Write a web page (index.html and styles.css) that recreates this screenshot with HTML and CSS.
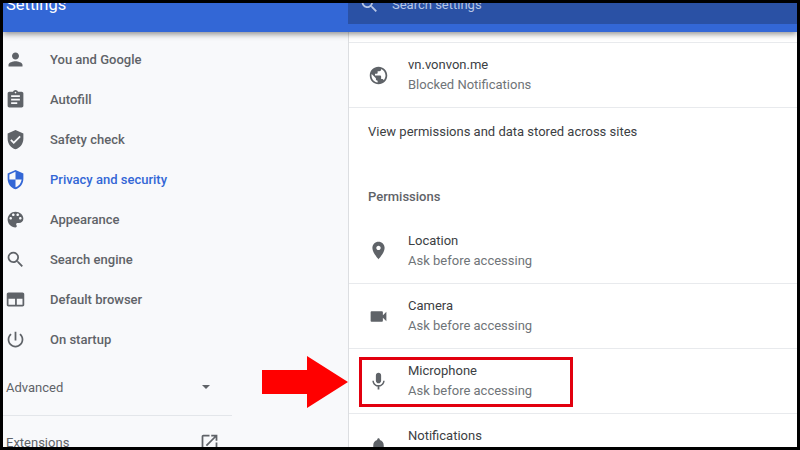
FILE: index.html
```html
<!DOCTYPE html>
<html lang="en">
	<head>
		<meta charset="UTF-8">
		<meta name="viewport" content="width=device-width, initial-scale=1.0">
		<title>Settings</title>
		<link rel="stylesheet" href="styles.css">
	</head>
	<body>
		<div class="app">
			<header class="topbar">
				<div class="topbar-title">Settings</div>
				<div class="searchbox">
					<svg class="search-icon" viewBox="0 0 24 24"><path d="M15.5 14h-.79l-.28-.27C15.41 12.59 16 11.11 16 9.5 16 5.91 13.09 3 9.5 3S3 5.91 3 9.5 5.91 16 9.5 16c1.61 0 3.09-.59 4.23-1.57l.27.28v.79l5 4.99L20.49 19l-4.99-5zm-6 0C7.01 14 5 11.99 5 9.5S7.01 5 9.5 5 14 7.01 14 9.5 11.99 14 9.5 14z"/></svg>
					<span>Search settings</span>
				</div>
			</header>
			<div class="content">
				<nav class="sidebar">
					<div class="nav-item">
						<svg class="icon" viewBox="0 0 24 24"><path d="M12 12c2.21 0 4-1.79 4-4s-1.79-4-4-4-4 1.79-4 4 1.79 4 4 4zm0 2c-2.67 0-8 1.34-8 4v2h16v-2c0-2.66-5.33-4-8-4z"/></svg>
						<span>You and Google</span>
					</div>
					<div class="nav-item">
						<svg class="icon" viewBox="0 0 24 24"><path d="M19 3h-4.18C14.4 1.84 13.3 1 12 1c-1.3 0-2.4.84-2.82 2H5c-1.1 0-2 .9-2 2v14c0 1.1.9 2 2 2h14c1.1 0 2-.9 2-2V5c0-1.1-.9-2-2-2zm-7 0c.55 0 1 .45 1 1s-.45 1-1 1-1-.45-1-1 .45-1 1-1zm2 14H7v-2h7v2zm3-4H7v-2h10v2zm0-4H7V7h10v2z"/></svg>
						<span>Autofill</span>
					</div>
					<div class="nav-item">
						<svg class="icon" viewBox="0 0 24 24"><path d="M12 1L3 5v6c0 5.55 3.84 10.74 9 12 5.16-1.26 9-6.45 9-12V5l-9-4zm-2 16l-4-4 1.41-1.41L10 14.17l6.59-6.59L18 9l-8 8z"/></svg>
						<span>Safety check</span>
					</div>
					<div class="nav-item active">
						<svg class="icon" viewBox="0 0 24 24"><path d="M12 1L3 5v6c0 5.55 3.84 10.74 9 12 5.16-1.26 9-6.45 9-12V5l-9-4zm0 10.99h7c-.53 4.12-3.28 7.79-7 8.94V12H5V6.3l7-3.11v8.8z"/></svg>
						<span>Privacy and security</span>
					</div>
					<div class="nav-item">
						<svg class="icon" viewBox="0 0 24 24"><path d="M12 3c-4.97 0-9 4.03-9 9s4.03 9 9 9c.83 0 1.5-.67 1.5-1.5 0-.39-.15-.74-.39-1.01-.23-.26-.38-.61-.38-.99 0-.83.67-1.5 1.5-1.5H16c2.76 0 5-2.24 5-5 0-4.42-4.03-8-9-8zm-5.5 9c-.83 0-1.5-.67-1.5-1.5S5.67 9 6.5 9 8 9.67 8 10.5 7.33 12 6.5 12zm3-4C8.67 8 8 7.33 8 6.5S8.67 5 9.5 5s1.5.67 1.5 1.5S10.33 8 9.5 8zm5 0c-.83 0-1.5-.67-1.5-1.5S13.67 5 14.5 5s1.5.67 1.5 1.5S15.33 8 14.5 8zm3 4c-.83 0-1.5-.67-1.5-1.5S16.67 9 17.5 9s1.5.67 1.5 1.5-.67 1.5-1.5 1.5z"/></svg>
						<span>Appearance</span>
					</div>
					<div class="nav-item">
						<svg class="icon" viewBox="0 0 24 24"><path d="M15.5 14h-.79l-.28-.27C15.41 12.59 16 11.11 16 9.5 16 5.91 13.09 3 9.5 3S3 5.91 3 9.5 5.91 16 9.5 16c1.61 0 3.09-.59 4.23-1.57l.27.28v.79l5 4.99L20.49 19l-4.99-5zm-6 0C7.01 14 5 11.99 5 9.5S7.01 5 9.5 5 14 7.01 14 9.5 11.99 14 9.5 14z"/></svg>
						<span>Search engine</span>
					</div>
					<div class="nav-item">
						<svg class="icon" viewBox="0 0 24 24"><path fill-rule="evenodd" d="M20 4H4c-1.1 0-2 .9-2 2v12c0 1.1.9 2 2 2h16c1.1 0 2-.9 2-2V6c0-1.1-.9-2-2-2zM4 11h7.5v7H4v-7zm9.5 0H20v7h-6.5v-7z"/></svg>
						<span>Default browser</span>
					</div>
					<div class="nav-item">
						<svg class="icon" viewBox="0 0 24 24"><path d="M13 3h-2v10h2V3zm4.83 2.17l-1.42 1.42C17.99 7.86 19 9.81 19 12c0 3.87-3.13 7-7 7s-7-3.13-7-7c0-2.19 1.01-4.14 2.58-5.42L6.17 5.17C4.23 6.82 3 9.26 3 12c0 4.97 4.03 9 9 9s9-4.03 9-9c0-2.74-1.23-5.18-3.17-6.83z"/></svg>
						<span>On startup</span>
					</div>
					<div class="nav-advanced">
						<span>Advanced</span>
						<i class="caret"></i>
					</div>
					<div class="nav-extensions">
						<span>Extensions</span>
						<svg class="icon" viewBox="0 0 24 24"><path d="M19 19H5V5h7V3H5c-1.11 0-2 .9-2 2v14c0 1.1.89 2 2 2h14c1.1 0 2-.9 2-2v-7h-2v7zM14 3v2h3.59l-9.83 9.83 1.41 1.41L19 6.41V10h2V3h-7z"/></svg>
					</div>
				</nav>
				<main class="panel">
					<div class="row first">
						<svg class="icon" viewBox="0 0 24 24"><path d="M12 2C6.48 2 2 6.48 2 12s4.48 10 10 10 10-4.48 10-10S17.52 2 12 2zm-1 17.93c-3.95-.49-7-3.85-7-7.93 0-.62.08-1.21.21-1.79L9 15v1c0 1.1.9 2 2 2v1.93zm6.9-2.54c-.26-.81-1-1.39-1.9-1.39h-1v-3c0-.55-.45-1-1-1H8v-2h2c.55 0 1-.45 1-1V7h2c1.1 0 2-.9 2-2v-.41c2.93 1.19 5 4.06 5 7.41 0 2.08-.8 3.97-2.1 5.39z"/></svg>
						<div class="row-text">
							<div class="row-title">vn.vonvon.me</div>
							<div class="row-sub">Blocked Notifications</div>
						</div>
					</div>
					<div class="view-link">View permissions and data stored across sites</div>
					<h2 class="section-title">Permissions</h2>
					<div class="row plain">
						<svg class="icon" viewBox="0 0 24 24"><path d="M12 2C8.13 2 5 5.13 5 9c0 5.25 7 13 7 13s7-7.75 7-13c0-3.87-3.13-7-7-7zm0 9.5c-1.38 0-2.5-1.12-2.5-2.5s1.12-2.5 2.5-2.5 2.5 1.12 2.5 2.5-1.12 2.5-2.5 2.5z"/></svg>
						<div class="row-text">
							<div class="row-title">Location</div>
							<div class="row-sub">Ask before accessing</div>
						</div>
					</div>
					<div class="row">
						<svg class="icon" viewBox="0 0 24 24"><path d="M17 10.5V7c0-.55-.45-1-1-1H4c-.55 0-1 .45-1 1v10c0 .55.45 1 1 1h12c.55 0 1-.45 1-1v-3.5l4 4v-11l-4 4z"/></svg>
						<div class="row-text">
							<div class="row-title">Camera</div>
							<div class="row-sub">Ask before accessing</div>
						</div>
					</div>
					<div class="row">
						<svg class="icon" viewBox="0 0 24 24"><path d="M12 14c1.66 0 2.99-1.34 2.99-3L15 5c0-1.66-1.34-3-3-3S9 3.34 9 5v6c0 1.66 1.34 3 3 3zm5.3-3c0 3-2.54 5.1-5.3 5.1S6.7 14 6.7 11H5c0 3.41 2.72 6.23 6 6.72V21h2v-3.28c3.28-.48 6-3.3 6-6.72h-1.7z"/></svg>
						<div class="row-text">
							<div class="row-title">Microphone</div>
							<div class="row-sub">Ask before accessing</div>
						</div>
					</div>
					<div class="row">
						<svg class="icon" viewBox="0 0 24 24"><path d="M12 22c1.1 0 2-.9 2-2h-4c0 1.1.89 2 2 2zm6-6v-5c0-3.07-1.64-5.64-4.5-6.32V4c0-.83-.67-1.5-1.5-1.5s-1.5.67-1.5 1.5v.68C7.63 5.36 6 7.92 6 11v5l-2 2v1h16v-1l-2-2z"/></svg>
						<div class="row-text">
							<div class="row-title">Notifications</div>
							<div class="row-sub">Ask before accessing</div>
						</div>
					</div>
				</main>
			</div>
			<!-- red annotation on top of the screenshot -->
			<svg class="arrow" viewBox="0 0 86 52"><polygon points="0,14 45,14 45,0 86,26 45,52 45,38 0,38"/></svg>
			<div class="highlight"></div>
		</div>
	</body>
</html>
```

FILE: styles.css
```css
html, body {
	margin: 0;
	height: 100%;
}
body {
	width: 800px;
	height: 450px;
	box-sizing: border-box;
	padding: 3px;
	background: #000;
	font-family: Roboto, "Liberation Sans", sans-serif;
	font-size: 13px;
	overflow: hidden;
}
.app {
	position: relative;
	height: 444px;
	display: flex;
	flex-direction: column;
	overflow: hidden;
	background: #fff;
}
.topbar {
	position: relative;
	z-index: 2;
	flex: none;
	height: 29px;
	display: flex;
	background: #3367d6;
	box-shadow: 0 2px 6px rgba(0, 0, 0, 0.45);
}
.topbar-title {
	width: 345px;
	margin-top: -8px;
	padding-left: 3px;
	box-sizing: border-box;
	font-size: 16.5px;
	line-height: 20px;
	color: #fff;
}
.searchbox {
	flex: 1;
	height: 21px;
	display: flex;
	gap: 12px;
	padding-left: 11px;
	background: #2a51a5;
	color: #b7c6e6;
	line-height: 20px;
	overflow: hidden;
}
.searchbox span {
	margin-top: -8px;
}
.search-icon {
	flex: none;
	width: 21px;
	height: 21px;
	margin-top: -9px;
	fill: #b7c6e6;
}
.content {
	flex: 1;
	display: flex;
	min-height: 0;
}
.icon {
	flex: none;
	width: 21px;
	height: 21px;
	fill: #5f6368;
}
.sidebar {
	flex: none;
	width: 345px;
	padding-top: 7px;
	box-sizing: border-box;
	background: #f8f9fb;
	color: #5f6368;
	font-weight: 500;
}
.nav-item {
	height: 40px;
	display: flex;
	align-items: center;
	gap: 24px;
	padding-left: 2px;
}
.nav-item.active {
	color: #3367d6;
}
.nav-item.active .icon {
	fill: #3367d6;
}
.nav-advanced {
	width: 229px;
	height: 57px;
	display: flex;
	align-items: center;
	justify-content: space-between;
	padding: 0 3px;
	border-bottom: 1px solid #e3e6ea;
	box-sizing: border-box;
	font-weight: 400;
}
.caret {
	margin-right: 19px;
	border-left: 4px solid transparent;
	border-right: 4px solid transparent;
	border-top: 4px solid #5f6368;
}
.nav-extensions {
	width: 214px;
	display: flex;
	justify-content: space-between;
	align-items: center;
	padding: 16px 0 0 3px;
	font-weight: 400;
}
.panel {
	flex: 1;
	padding-top: 10px;
	border-left: 1px solid #dcdee1;
	min-width: 0;
}
.row {
	height: 65px;
	box-sizing: border-box;
	display: flex;
	align-items: center;
	gap: 19px;
	padding-left: 19px;
	border-top: 1px solid #e8eaed;
}
.row.plain {
	border-top: 0;
}
.row-title {
	color: #3c4043;
	line-height: 20px;
}
.row-sub {
	color: #6f7478;
	line-height: 20px;
}
.view-link {
	height: 46px;
	padding-left: 19px;
	display: flex;
	align-items: center;
	border-top: 1px solid #e8eaed;
	color: #3c4043;
}
.section-title {
	margin: 0;
	height: 64px;
	padding: 34px 0 0 19px;
	box-sizing: border-box;
	font-size: 13px;
	font-weight: 500;
	line-height: 18px;
	color: #5f6368;
}
.arrow {
	position: absolute;
	left: 259px;
	top: 353px;
	width: 86px;
	height: 52px;
	fill: #f00;
}
.highlight {
	position: absolute;
	left: 356px;
	top: 354px;
	width: 214px;
	height: 50px;
	box-sizing: border-box;
	border: 3px solid #e2000f;
}
```
